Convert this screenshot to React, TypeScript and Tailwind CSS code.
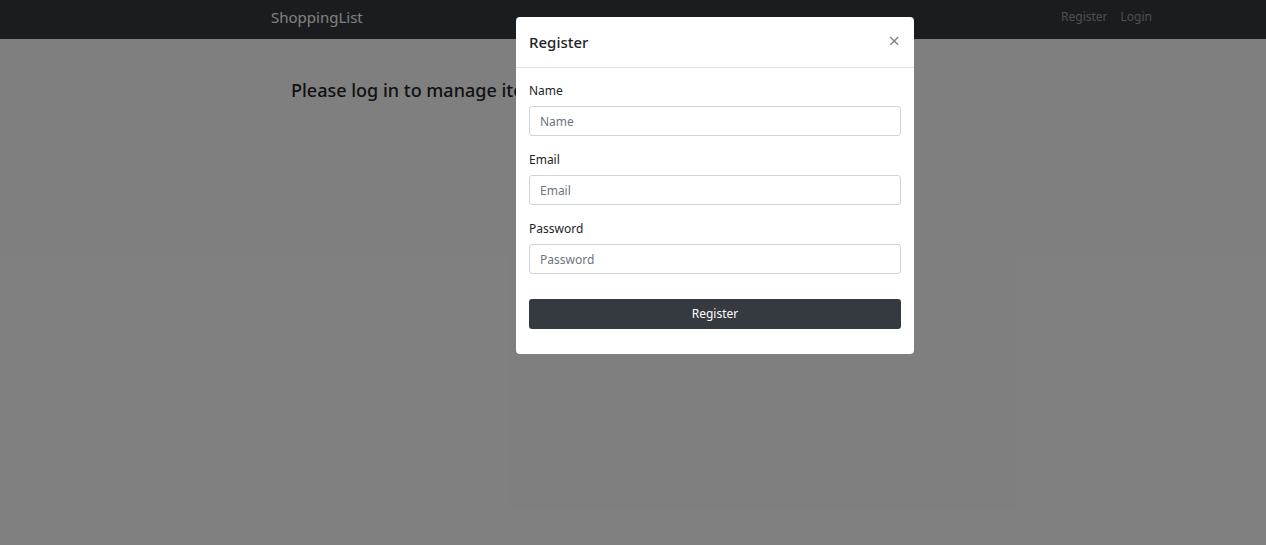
import React from "react";

const fields = [
    { label: "Name", type: "text" },
    { label: "Email", type: "email" },
    { label: "Password", type: "password" },
];

const App = () => {
    return (
        <div className="relative h-[545px] w-full overflow-hidden bg-white font-['Noto_Sans',sans-serif] text-[#212529]">
            <nav className="h-[39px] bg-[#343a40] flex items-center justify-between pb-[5px] pl-[271px] pr-[114px]">
                <span className="text-[15px] text-white">ShoppingList</span>
                <div className="flex gap-[13px] text-[12px] text-white/50">
                    <span>Register</span>
                    <span>Login</span>
                </div>
            </nav>
            <div className="pl-[291px] pt-[41px]">
                <h4 className="text-[18px] font-medium leading-[1.2]">Please log in to manage items.</h4>
            </div>

            <div className="absolute inset-0 bg-black/50" />

            <div className="absolute left-[516px] top-[17px] w-[398px] rounded-[4px] bg-white">
                <div className="h-[51px] flex items-center justify-between px-[13px] border-b border-[#dee2e6]">
                    <h5 className="text-[15px] font-medium">Register</h5>
                    <span className="text-[20px] leading-none text-black/50 mr-[1px] -mt-[2px]">×</span>
                </div>
                <form className="px-[13px] pt-[13px] pb-[25px]">
                    {fields.map((f) => (
                        <div className="mb-[14px]" key={f.label}>
                            <label className="block text-[12px] leading-[19px] mb-[6px]">{f.label}</label>
                            <input
                                type={f.type}
                                placeholder={f.label}
                                className="block w-full h-[30px] px-[10px] text-[12px] border border-[#ced4da] rounded-[3px] placeholder:text-[#6c757d] outline-none"
                            />
                        </div>
                    ))}
                    <button
                        type="button"
                        className="mt-[11px] w-full h-[30px] rounded-[3px] bg-[#343a40] text-white text-[12px]"
                    >
                        Register
                    </button>
                </form>
            </div>
        </div>
    );
};

export default App;
